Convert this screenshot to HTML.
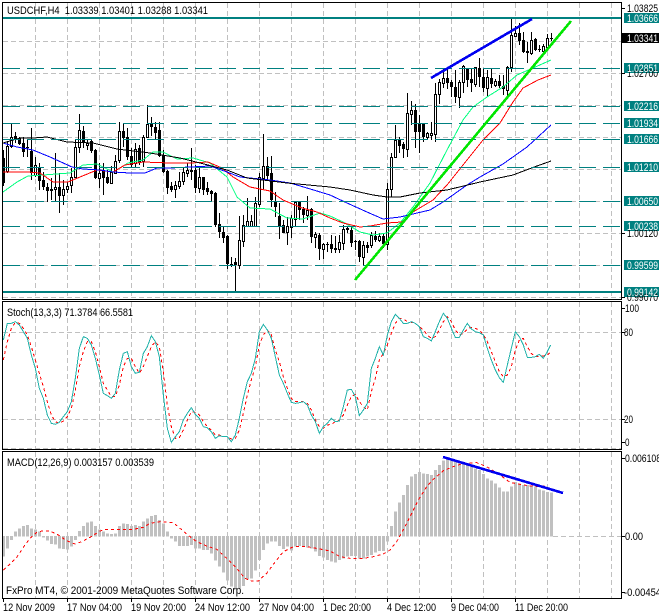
<!DOCTYPE html>
<html><head><meta charset="utf-8"><style>
html,body{margin:0;padding:0;background:#fff}
svg{display:block;font-family:"Liberation Sans",sans-serif;font-size:11px}
.c *{shape-rendering:crispEdges}
.n{vector-effect:non-scaling-stroke}
</style></head><body>
<svg width="659" height="615" viewBox="0 0 659 615" xmlns="http://www.w3.org/2000/svg">
<rect width="659" height="615" fill="#fff"/>
<g class="c">
<!-- grid -->
<path fill="none" stroke="#c0c0c0" stroke-dasharray="5 3" d="M35.5 3V299M67.5 3V299M99.5 3V299M131.5 3V299M163.5 3V299M195.5 3V299M227.5 3V299M259.5 3V299M291.5 3V299M323.5 3V299M355.5 3V299M387.5 3V299M419.5 3V299M451.5 3V299M483.5 3V299M515.5 3V299M547.5 3V299M579.5 3V299M611.5 3V299
M3 41.5H621M3 73.5H621M3 105.5H621M3 137.5H621M3 169.5H621M3 201.5H621M3 233.5H621M3 265.5H621M3 297.5H621
M35.5 302V449M67.5 302V449M99.5 302V449M131.5 302V449M163.5 302V449M195.5 302V449M227.5 302V449M259.5 302V449M291.5 302V449M323.5 302V449M355.5 302V449M387.5 302V449M419.5 302V449M451.5 302V449M483.5 302V449M515.5 302V449M547.5 302V449M579.5 302V449M611.5 302V449
M3 332.5H621M3 419.5H621M3 448.5H621
M35.5 452V598M67.5 452V598M99.5 452V598M131.5 452V598M163.5 452V598M195.5 452V598M227.5 452V598M259.5 452V598M291.5 452V598M323.5 452V598M355.5 452V598M387.5 452V598M419.5 452V598M451.5 452V598M483.5 452V598M515.5 452V598M547.5 452V598M579.5 452V598M611.5 452V598
M553 536.5H621"/>
<!-- wicks -->
<path fill="none" stroke="#000" d="M3.5 150V186M7.5 142V173M11.5 124V148M15.5 132V143M19.5 137V145M23.5 137V157M27.5 140V157M31.5 128V180M35.5 157V177M39.5 163V190M43.5 172V190M47.5 183V202M51.5 178V200M55.5 153V202M59.5 173V213M63.5 180V205M67.5 182V193M71.5 168V193M75.5 140V178M79.5 114V153M83.5 126V148M87.5 140V150M91.5 140V153M95.5 149V179M99.5 163V188M103.5 163V195M107.5 170V184M111.5 166V184M115.5 155V174M119.5 122V163M123.5 123V147M127.5 128V160M131.5 148V167M135.5 143V167M139.5 145V165M143.5 135V167M147.5 105V138M151.5 117V136M155.5 122V140M159.5 122V157M163.5 150V173M167.5 170V194M171.5 182V192M175.5 181V198M179.5 172V189M183.5 168V185M187.5 163V177M191.5 148V180M195.5 165V193M199.5 167V193M203.5 177V195M207.5 182V195M211.5 190V202M215.5 192V227M219.5 213V238M223.5 227V243M227.5 235V269M231.5 257V267M235.5 258V292M239.5 216V269M243.5 215V247M247.5 198V227M251.5 215V227M255.5 197V227M259.5 173V207M263.5 134V189M267.5 157V180M271.5 156V207M275.5 192V217M279.5 203V239M283.5 220V233M287.5 217V245M291.5 215V238M295.5 201V227M299.5 201V220M303.5 207V223M307.5 196V220M311.5 208V243M315.5 232V248M319.5 233V260M323.5 243V259M327.5 242V252M331.5 235V253M335.5 236V253M339.5 235V253M343.5 225V250M347.5 226V233M351.5 227V247M355.5 240V250M359.5 240V262M363.5 241V265M367.5 242V253M371.5 232V248M375.5 231V242M379.5 233V242M383.5 233V248M387.5 183V250M391.5 153V197M395.5 125V157M399.5 137V153M403.5 142V158M407.5 93V157M411.5 101V125M415.5 104V148M419.5 115V153M423.5 123V142M427.5 132V140M431.5 122V140M435.5 83V142M439.5 79V104M443.5 68V88M447.5 68V89M451.5 80V97M455.5 70V103M459.5 80V108M463.5 65V93M467.5 68V87M471.5 68V92M475.5 67V87M479.5 58V87M483.5 68V92M487.5 70V97M491.5 68V88M495.5 79V87M499.5 75V88M503.5 75V95M507.5 66V98M511.5 18V72M515.5 26V37M519.5 23V45M523.5 32V53M527.5 42V63M531.5 32V55M535.5 38V51M539.5 45V52M543.5 44V53M547.5 34V49M551.5 33V41"/>
<!-- black bodies -->
<path fill="#000" d="M2 158h3v25h-3zM14 136h3v4h-3zM18 138h3v6h-3zM22 143h3v9h-3zM26 147h3v1h-3zM30 151h3v22h-3zM38 168h3v13h-3zM42 180h3v7h-3zM46 187h3v4h-3zM50 189h3v2h-3zM58 187h3v9h-3zM82 131h3v12h-3zM90 141h3v10h-3zM94 150h3v28h-3zM102 171h3v7h-3zM106 177h3v6h-3zM122 131h3v7h-3zM126 137h3v20h-3zM130 156h3v9h-3zM138 148h3v15h-3zM150 123h3v4h-3zM154 127h3v6h-3zM158 130h3v26h-3zM162 155h3v17h-3zM166 171h3v17h-3zM170 186h3v4h-3zM194 170h3v18h-3zM202 177h3v13h-3zM206 188h3v4h-3zM210 191h3v3h-3zM214 193h3v32h-3zM218 224h3v8h-3zM222 232h3v6h-3zM226 236h3v28h-3zM230 264h3v1h-3zM234 262h3v3h-3zM266 166h3v10h-3zM270 173h3v27h-3zM274 201h3v6h-3zM278 216h3v11h-3zM282 225h3v8h-3zM298 202h3v8h-3zM302 209h3v6h-3zM310 209h3v28h-3zM318 235h3v14h-3zM326 244h3v1h-3zM330 244h3v5h-3zM334 248h3v2h-3zM346 228h3v2h-3zM350 230h3v13h-3zM354 241h3v1h-3zM358 241h3v16h-3zM366 245h3v3h-3zM374 236h3v4h-3zM382 236h3v8h-3zM398 140h3v6h-3zM402 144h3v5h-3zM414 110h3v22h-3zM418 123h3v9h-3zM422 123h3v14h-3zM446 78h3v5h-3zM450 82h3v5h-3zM454 87h3v10h-3zM466 69h3v11h-3zM470 79h3v4h-3zM478 68h3v9h-3zM482 77h3v11h-3zM490 78h3v6h-3zM498 81h3v5h-3zM502 86h3v3h-3zM518 33h3v8h-3zM522 40h3v12h-3zM526 51h3v2h-3zM534 39h3v11h-3zM538 49h3v1h-3zM550 38h3v1h-3z"/>
<!-- white bodies -->
<path fill="#fff" stroke="#000" d="M6.5 146.5h2v25h-2zM10.5 137.5h2v9h-2zM34.5 165.5h2v10h-2zM54.5 187.5h2v2h-2zM62.5 189.5h2v6h-2zM66.5 186.5h2v3h-2zM70.5 177.5h2v8h-2zM74.5 147.5h2v30h-2zM78.5 130.5h2v17h-2zM86.5 143.5h2v2h-2zM98.5 173.5h2v5h-2zM110.5 172.5h2v11h-2zM114.5 161.5h2v12h-2zM118.5 131.5h2v29h-2zM134.5 149.5h2v14h-2zM142.5 137.5h2v24h-2zM146.5 124.5h2v13h-2zM174.5 185.5h2v4h-2zM178.5 181.5h2v5h-2zM182.5 172.5h2v9h-2zM186.5 170.5h2v3h-2zM190.5 170.5h2v1h-2zM198.5 177.5h2v11h-2zM238.5 240.5h2v25h-2zM242.5 225.5h2v16h-2zM246.5 221.5h2v5h-2zM250.5 221.5h2v5h-2zM254.5 203.5h2v23h-2zM258.5 177.5h2v27h-2zM262.5 166.5h2v12h-2zM286.5 226.5h2v6h-2zM290.5 218.5h2v9h-2zM294.5 202.5h2v17h-2zM306.5 210.5h2v5h-2zM314.5 234.5h2v3h-2zM322.5 244.5h2v5h-2zM338.5 242.5h2v7h-2zM342.5 229.5h2v14h-2zM362.5 245.5h2v12h-2zM370.5 235.5h2v10h-2zM378.5 236.5h2v4h-2zM386.5 189.5h2v55h-2zM390.5 157.5h2v32h-2zM394.5 140.5h2v17h-2zM406.5 113.5h2v36h-2zM410.5 110.5h2v4h-2zM426.5 133.5h2v4h-2zM430.5 133.5h2v2h-2zM434.5 94.5h2v40h-2zM438.5 82.5h2v12h-2zM442.5 78.5h2v5h-2zM458.5 82.5h2v15h-2zM462.5 66.5h2v16h-2zM474.5 67.5h2v17h-2zM486.5 77.5h2v11h-2zM494.5 81.5h2v4h-2zM506.5 67.5h2v23h-2zM510.5 35.5h2v32h-2zM514.5 33.5h2v3h-2zM530.5 40.5h2v13h-2zM542.5 46.5h2v5h-2zM546.5 38.5h2v9h-2z"/>
<!-- moving averages -->
<polyline fill="none" stroke="#00ff7f" points="3,192 17,182 28,176 43,175 70,173 83,165 97,164 113,172 128,163 143,160 153,152 163,152 177,159 193,158 210,163 227,177 237,197 250,208 270,209 287,218 303,219 320,213 330,216 343,222 360,232 373,235 387,233 400,223 413,207 430,183 447,150 463,120 473,107 487,97 503,87 517,75 533,68 551,60"/>
<polyline fill="none" stroke="#ff0000" points="3,172 28,172 40,173 53,182 68,182 80,177 97,170 113,172 125,165 143,162 170,163 190,163 208,162 222,168 233,177 250,187 270,191 283,200 302,208 317,212 330,218 343,223 360,227 370,226 387,223 402,222 413,212 433,200 447,185 463,165 483,140 500,123 513,102 523,88 538,80 551,75"/>
<polyline fill="none" stroke="#0000ff" points="3,143 17,147 33,150 50,157 72,167 83,169 100,170 113,172 130,173 145,173 157,168 170,168 190,167 210,166 227,172 240,177 270,180 290,183 307,188 330,195 347,203 367,212 383,219 400,217 430,210 443,202 467,185 480,177 503,164 527,147 551,125"/>
<polyline fill="none" stroke="#000" points="3,143 20,138 33,138 47,137 67,142 93,143 117,149 150,153 180,158 200,163 227,170 247,178 287,183 330,187 350,190 373,195 387,197 400,197 420,193 447,190 480,182 513,175 537,166 551,161"/>
<!-- horizontal levels -->
<path fill="none" stroke="#008080" stroke-dasharray="17 7" d="M3 68.5H621M3 106.5H621M3 123.5H621M3 139.5H621M3 167.5H621M3 201.5H621M3 226.5H621M3 265.5H621"/>
<path fill="none" stroke="#008080" stroke-width="2" d="M3 18H621M3 292H621"/>
<!-- trend lines -->
<line x1="355" y1="280" x2="571" y2="21" stroke="#00e600" stroke-width="2.6"/>
<line x1="431" y1="78" x2="532" y2="19" stroke="#0000f0" stroke-width="2.6"/>
<!-- stochastic -->
<g transform="translate(0,295) scale(.33333)" fill="none">
<polyline class="n" stroke="#ff0000" stroke-dasharray="3 3" points="10,195 22,140 34,100 46,82 58,85 70,100 82,120 94,155 106,195 118,235 130,275 142,320 154,360 166,380 178,385 190,378 202,365 214,340 226,285 238,215 250,170 262,140 274,140 286,170 298,215 310,265 322,285 334,305 346,305 358,270 370,215 382,190 394,190 406,215 418,235 430,215 442,185 454,155 466,140 478,155 490,230 502,330 514,395 526,430 538,428 550,405 562,375 574,350 586,352 598,360 610,380 622,395 634,405 646,420 658,420 670,425 682,425 694,432 706,430 718,405 730,355 742,300 754,255 766,215 778,150 790,120 802,105 814,120 826,165 838,200 850,245 862,280 874,310 886,320 898,320 910,320 922,325 934,345 946,375 958,395 970,400 982,390 994,388 1006,380 1018,375 1030,360 1042,330 1054,305 1066,298 1078,320 1090,335 1102,345 1114,290 1126,250 1138,195 1150,175 1162,150 1174,115 1186,85 1198,70 1210,72 1222,80 1234,82 1246,85 1258,95 1270,105 1282,120 1294,130 1306,125 1318,105 1330,80 1342,65 1354,80 1366,105 1378,120 1390,115 1402,102 1414,97 1426,100 1438,105 1450,118 1462,140 1474,170 1486,200 1498,230 1510,245 1522,240 1534,215 1546,165 1558,135 1570,130 1582,155 1594,175 1606,185 1618,185 1630,183 1642,180 1652,170"/>
<polyline class="n" stroke="#20b2aa" points="10,135 22,85 34,85 46,80 58,90 70,110 82,130 94,180 106,220 118,280 130,310 142,360 154,385 166,388 178,382 190,365 202,350 214,320 226,250 238,160 250,125 262,130 274,150 286,190 298,240 310,295 322,302 334,310 346,295 358,225 370,175 382,170 394,215 406,235 418,232 430,175 442,155 454,122 466,140 478,185 490,300 502,400 514,442 526,425 538,410 550,375 562,355 574,338 586,358 598,370 610,395 622,398 634,410 646,430 658,422 670,425 682,425 694,440 706,420 718,370 730,310 742,260 754,235 766,190 778,110 790,88 802,105 814,130 826,185 838,240 850,265 862,295 874,322 886,325 898,323 910,320 922,330 934,360 946,380 958,415 970,395 982,385 994,370 1006,380 1018,378 1030,335 1042,285 1054,283 1066,305 1078,362 1090,345 1102,325 1114,220 1126,190 1138,155 1150,180 1162,120 1174,80 1186,58 1198,70 1210,85 1222,85 1234,80 1246,85 1258,95 1270,125 1282,130 1294,138 1306,110 1318,80 1330,55 1342,70 1354,100 1366,127 1378,127 1390,105 1402,85 1414,102 1426,110 1438,113 1450,120 1462,160 1474,195 1486,225 1498,248 1510,262 1522,210 1534,160 1546,110 1558,125 1570,150 1582,187 1594,187 1606,185 1618,178 1630,190 1642,170 1652,150"/>
</g>
<!-- MACD histogram -->
<path transform="translate(0,450) scale(1,.33333)" class="n" fill="none" stroke="#c0c0c0" stroke-width="3" d="M3.5 258V320M7.5 258V295M11.5 258V270M15.5 260V245M19.5 260V235M23.5 260V228M27.5 260V225M31.5 260V235M35.5 260V238M39.5 260V245M43.5 258V262M47.5 258V272M51.5 258V282M55.5 258V283M59.5 258V295M63.5 258V297M67.5 258V298M71.5 258V290M75.5 258V270M79.5 260V243M83.5 260V228M87.5 260V218M91.5 260V215M95.5 260V228M99.5 260V238M103.5 260V245M107.5 260V250M111.5 260V252M115.5 260V250M119.5 260V228M123.5 260V220M127.5 260V222M131.5 260V228M135.5 260V225M139.5 260V228M143.5 260V215M147.5 260V205M151.5 260V198M155.5 260V195M159.5 260V210M163.5 260V220M167.5 260V245M171.5 258V265M175.5 258V275M179.5 258V288M183.5 258V288M187.5 258V288M191.5 258V285M195.5 258V295M199.5 258V295M203.5 258V300M207.5 258V300M211.5 258V310M215.5 258V332M219.5 258V350M223.5 258V367M227.5 258V392M231.5 258V410M235.5 258V418M239.5 258V415M243.5 258V408M247.5 258V388M251.5 258V385M255.5 258V362M259.5 258V330M263.5 258V300M267.5 258V280M271.5 258V275M275.5 258V275M279.5 258V288M283.5 258V297M287.5 258V290M291.5 258V302M295.5 258V290M299.5 258V288M303.5 258V288M307.5 258V292M311.5 258V295M315.5 258V305M319.5 258V318M323.5 258V322M327.5 258V330M331.5 258V335M335.5 258V337M339.5 258V330M343.5 258V325M347.5 258V320M351.5 258V318M355.5 258V318M359.5 258V325M363.5 258V325M367.5 258V320M371.5 258V315M375.5 258V308M379.5 258V303M383.5 258V303M387.5 258V275M391.5 260V228M395.5 260V185M399.5 260V158M403.5 260V135M407.5 260V105M411.5 260V80M415.5 260V72M419.5 260V66M423.5 260V70M427.5 260V72M431.5 260V75M435.5 260V60M439.5 260V45M443.5 260V32M447.5 260V28M451.5 260V30M455.5 260V35M459.5 260V38M463.5 260V38M467.5 260V42M471.5 260V50M475.5 260V55M479.5 260V60M483.5 260V72M487.5 260V85M491.5 260V92M495.5 260V100M499.5 260V113M503.5 260V125M507.5 260V125M511.5 260V110M515.5 260V96M519.5 260V100M523.5 260V105M527.5 260V105M531.5 260V108M535.5 260V110M539.5 260V118M543.5 260V122M547.5 260V126M551.5 260V128"/>
<polyline transform="translate(0,450) scale(.33333)" class="n" fill="none" stroke="#ff0000" stroke-dasharray="3 3" points="10,360 30,342 50,322 75,285 90,265 110,247 130,242 150,243 175,255 200,272 225,282 245,275 270,262 300,243 320,238 350,238 400,238 430,232 450,220 480,215 520,218 540,235 570,260 590,275 620,288 650,298 680,325 710,355 735,385 755,393 775,393 800,370 830,330 850,305 880,290 920,290 960,297 990,303 1020,320 1050,325 1090,325 1120,320 1150,312 1170,300 1190,275 1215,230 1235,190 1255,150 1280,110 1300,88 1330,62 1360,50 1390,40 1430,38 1460,50 1500,75 1530,97 1570,105 1610,110 1640,108"/>
<line x1="443" y1="457" x2="563" y2="493" stroke="#0000f0" stroke-width="2.6"/>
<!-- frames + ticks -->
<path fill="none" stroke="#000" d="M2.5 2.5H621.5V299.5H2.5zM2.5 301.5H621.5V449.5H2.5zM2.5 451.5H621.5V598.5H2.5z
M622 8.5h3M622 41.5h3M622 73.5h3M622 233.5h3M622 297.5h3M622 308.5h3M622 332.5h3M622 419.5h3M622 442.5h3M622 458.5h3M622 536.5h3M622 592.5h3
M3.5 599V602M67.5 599V602M131.5 599V602M195.5 599V602M259.5 599V602M323.5 599V602M387.5 599V602M451.5 599V602M515.5 599V602"/>
<!-- price boxes -->
<rect x="624" y="13" width="35" height="10" fill="#008080"/>
<rect x="624" y="63" width="35" height="10" fill="#008080"/>
<rect x="624" y="101" width="35" height="10" fill="#008080"/>
<rect x="624" y="118" width="35" height="10" fill="#008080"/>
<rect x="624" y="134" width="35" height="10" fill="#008080"/>
<rect x="624" y="162" width="35" height="10" fill="#008080"/>
<rect x="624" y="196" width="35" height="10" fill="#008080"/>
<rect x="624" y="221" width="35" height="10" fill="#008080"/>
<rect x="624" y="260" width="35" height="10" fill="#008080"/>
<rect x="624" y="287" width="35" height="10" fill="#008080"/>
</g>
<!-- axis text -->
<g fill="#000">
<text x="627" y="12" textLength="31" lengthAdjust="spacingAndGlyphs">1.03825</text>
<text x="627" y="77" textLength="31" lengthAdjust="spacingAndGlyphs">1.02700</text>
<text x="627" y="237" textLength="31" lengthAdjust="spacingAndGlyphs">1.00120</text>
<text x="627" y="301" textLength="31" lengthAdjust="spacingAndGlyphs">0.99070</text>
<text x="625" y="312" textLength="14" lengthAdjust="spacingAndGlyphs">100</text>
<text x="624" y="336" textLength="9" lengthAdjust="spacingAndGlyphs">80</text>
<text x="624" y="423" textLength="9" lengthAdjust="spacingAndGlyphs">20</text>
<text x="625" y="446" textLength="4.5" lengthAdjust="spacingAndGlyphs">0</text>
<text x="625" y="462" textLength="36" lengthAdjust="spacingAndGlyphs">0.006108</text>
<text x="625" y="540" textLength="18" lengthAdjust="spacingAndGlyphs">0.00</text>
<text x="624" y="596" textLength="37" lengthAdjust="spacingAndGlyphs">-0.00454</text>
</g>
<rect x="622" y="33" width="37" height="10" fill="#000" shape-rendering="crispEdges"/>
<g fill="#fff">
<text x="627" y="22" textLength="31" lengthAdjust="spacingAndGlyphs">1.03666</text>
<text x="627" y="72" textLength="31" lengthAdjust="spacingAndGlyphs">1.02851</text>
<text x="627" y="110" textLength="31" lengthAdjust="spacingAndGlyphs">1.02216</text>
<text x="627" y="127" textLength="31" lengthAdjust="spacingAndGlyphs">1.01934</text>
<text x="627" y="143" textLength="31" lengthAdjust="spacingAndGlyphs">1.01666</text>
<text x="627" y="171" textLength="31" lengthAdjust="spacingAndGlyphs">1.01210</text>
<text x="627" y="205" textLength="31" lengthAdjust="spacingAndGlyphs">1.00650</text>
<text x="627" y="230" textLength="31" lengthAdjust="spacingAndGlyphs">1.00238</text>
<text x="627" y="269" textLength="31" lengthAdjust="spacingAndGlyphs">0.99599</text>
<text x="627" y="296" textLength="31" lengthAdjust="spacingAndGlyphs">0.99142</text>
<text x="627" y="42" textLength="31" lengthAdjust="spacingAndGlyphs">1.03341</text>
</g>
<g fill="#000">
<text x="7" y="14" textLength="201" lengthAdjust="spacingAndGlyphs" xml:space="preserve">USDCHF,H4  1.03339 1.03401 1.03288 1.03341</text>
<text x="7" y="316" textLength="126" lengthAdjust="spacingAndGlyphs">Stoch(13,3,3) 71.3784 66.5581</text>
<text x="7" y="466" textLength="147" lengthAdjust="spacingAndGlyphs">MACD(12,26,9) 0.003157 0.003539</text>
<text x="6" y="594" textLength="238" lengthAdjust="spacingAndGlyphs">FxPro MT4, © 2001-2009 MetaQuotes Software Corp.</text>
<text x="3" y="611" textLength="52" lengthAdjust="spacingAndGlyphs">12 Nov 2009</text>
<text x="67" y="611" textLength="55" lengthAdjust="spacingAndGlyphs">17 Nov 04:00</text>
<text x="131" y="611" textLength="55" lengthAdjust="spacingAndGlyphs">19 Nov 20:00</text>
<text x="195" y="611" textLength="55" lengthAdjust="spacingAndGlyphs">24 Nov 12:00</text>
<text x="259" y="611" textLength="55" lengthAdjust="spacingAndGlyphs">27 Nov 04:00</text>
<text x="323" y="611" textLength="48" lengthAdjust="spacingAndGlyphs">1 Dec 20:00</text>
<text x="387" y="611" textLength="49" lengthAdjust="spacingAndGlyphs">4 Dec 12:00</text>
<text x="451" y="611" textLength="48" lengthAdjust="spacingAndGlyphs">9 Dec 04:00</text>
<text x="515" y="611" textLength="53" lengthAdjust="spacingAndGlyphs">11 Dec 20:00</text>
</g>
</svg>
</body></html>
